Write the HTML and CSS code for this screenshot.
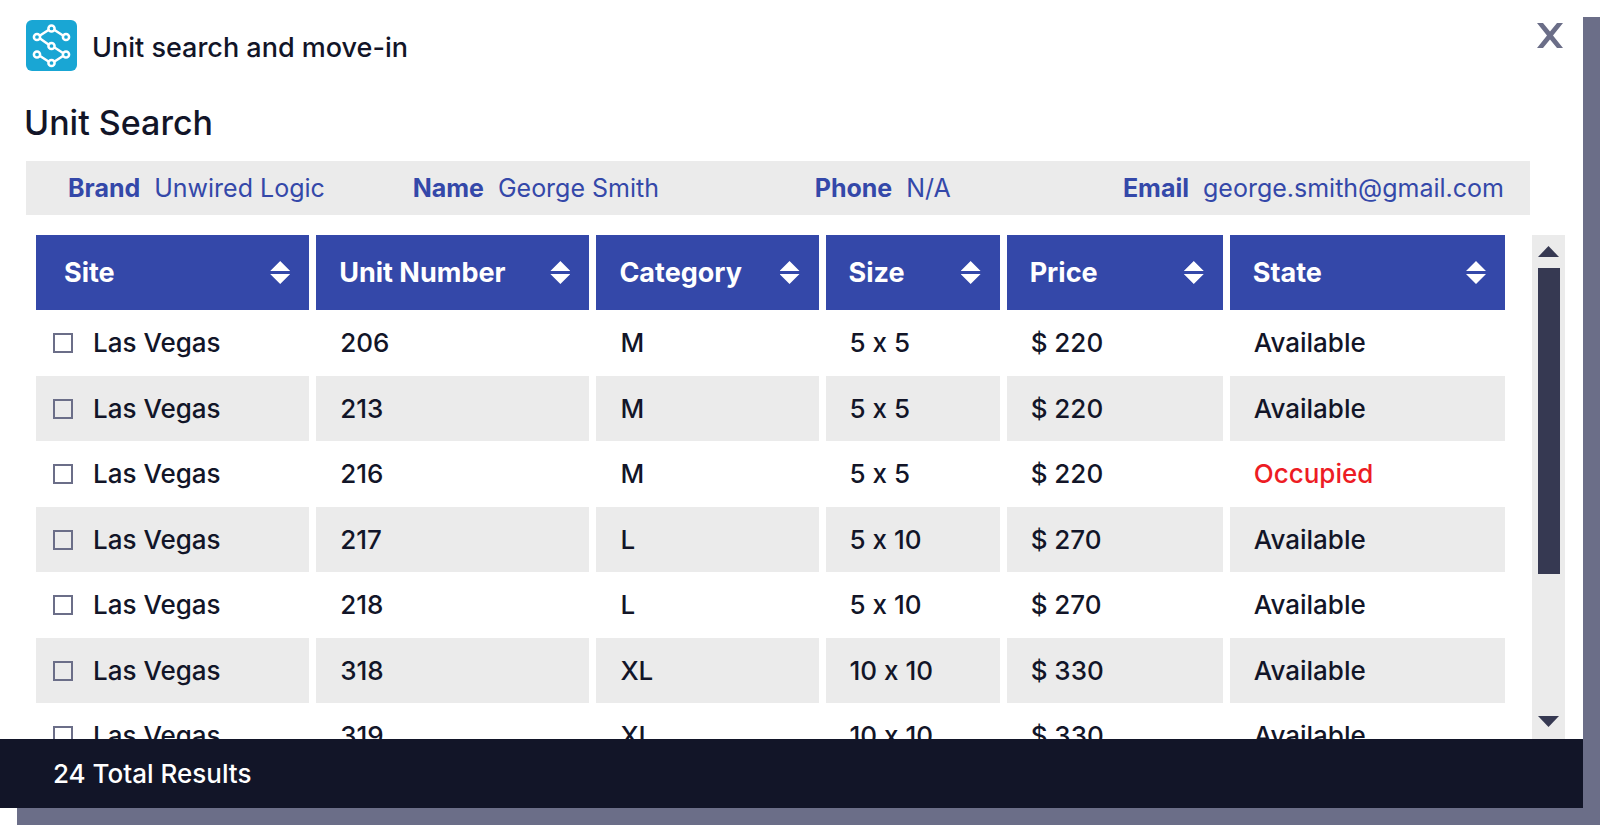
FILE: index.html
```html
<!DOCTYPE html>
<html lang="en">
<head>
  <meta charset="UTF-8">
  <meta name="viewport" content="width=device-width, initial-scale=1.0">
  <title>Unit search and move-in</title>
  <link rel="stylesheet" href="styles.css">
</head>
<body>
  <div class="modal">
    <header class="modal-header">
      <svg class="logo" viewBox="0 0 51 51" aria-hidden="true">
        <rect width="51" height="51" rx="6" fill="#19a6d4"/>
        <g fill="none" stroke="#fff" stroke-width="2.500">
          <path d="M37 15.500L28.500 10M22.500 10L14 15.500M14 18.500L22.500 24.500M28.500 27.500L37 33M37 36L28.500 41.500M22.500 41.500L14 36"/>
          <circle cx="25.500" cy="8.500" r="3.100"/>
          <circle cx="40" cy="17" r="3.100"/>
          <circle cx="11" cy="17" r="3.100"/>
          <circle cx="25.500" cy="26" r="3.100"/>
          <circle cx="40" cy="34.500" r="3.100"/>
          <circle cx="25.500" cy="43" r="3.100"/>
          <circle cx="11" cy="34.500" r="3.100"/>
        </g>
      </svg>
      <span class="modal-title">Unit search and move-in</span>
      <button type="button" class="close" aria-label="Close">
        <svg viewBox="0 0 26 25" aria-hidden="true">
          <path d="M0 0H6L13 8.500L20 0H26L16 12.500L26 25H20L13 16.500L6 25H0L10 12.500Z" fill="#6b6e88"/>
        </svg>
      </button>
    </header>

    <h1>Unit Search</h1>

    <div class="customer">
      <p><strong>Brand</strong>Unwired Logic</p>
      <p><strong>Name</strong>George Smith</p>
      <p><strong>Phone</strong>N/A</p>
      <p><strong>Email</strong>george.smith@gmail.com</p>
    </div>

    <div class="results">
      <div class="table-wrap">
        <table class="units">
          <colgroup>
            <col class="col-site">
            <col class="col-number">
            <col class="col-category">
            <col class="col-size">
            <col class="col-price">
            <col class="col-state">
          </colgroup>
          <thead>
            <tr>
              <th><button type="button" class="sort">Site</button></th>
              <th><button type="button" class="sort">Unit Number</button></th>
              <th><button type="button" class="sort">Category</button></th>
              <th><button type="button" class="sort">Size</button></th>
              <th><button type="button" class="sort">Price</button></th>
              <th><button type="button" class="sort">State</button></th>
            </tr>
          </thead>
          <tbody>
            <tr>
              <td><label><input type="checkbox">Las Vegas</label></td>
              <td>206</td>
              <td>M</td>
              <td>5 x 5</td>
              <td>$ 220</td>
              <td>Available</td>
            </tr>
            <tr>
              <td><label><input type="checkbox">Las Vegas</label></td>
              <td>213</td>
              <td>M</td>
              <td>5 x 5</td>
              <td>$ 220</td>
              <td>Available</td>
            </tr>
            <tr>
              <td><label><input type="checkbox">Las Vegas</label></td>
              <td>216</td>
              <td>M</td>
              <td>5 x 5</td>
              <td>$ 220</td>
              <td class="occupied">Occupied</td>
            </tr>
            <tr>
              <td><label><input type="checkbox">Las Vegas</label></td>
              <td>217</td>
              <td>L</td>
              <td>5 x 10</td>
              <td>$ 270</td>
              <td>Available</td>
            </tr>
            <tr>
              <td><label><input type="checkbox">Las Vegas</label></td>
              <td>218</td>
              <td>L</td>
              <td>5 x 10</td>
              <td>$ 270</td>
              <td>Available</td>
            </tr>
            <tr>
              <td><label><input type="checkbox">Las Vegas</label></td>
              <td>318</td>
              <td>XL</td>
              <td>10 x 10</td>
              <td>$ 330</td>
              <td>Available</td>
            </tr>
            <tr>
              <td><label><input type="checkbox">Las Vegas</label></td>
              <td>319</td>
              <td>XL</td>
              <td>10 x 10</td>
              <td>$ 330</td>
              <td>Available</td>
            </tr>
          </tbody>
        </table>
      </div>
      <div class="scrollbar">
        <button type="button" class="arrow up" aria-label="Scroll up"></button>
        <div class="track"><div class="thumb"></div></div>
        <button type="button" class="arrow down" aria-label="Scroll down"></button>
      </div>
    </div>

    <footer class="modal-footer">24 Total Results</footer>
  </div>
</body>
</html>
```
FILE: styles.css
```css
* {
  box-sizing: border-box;
}
body {
  height: 100vh;
  margin: 0;
  padding: 0 17px 17px 0;
  background: #fff;
  color: #121528;
  font-family: Inter, "Liberation Sans", sans-serif;
  font-size: 26px;
  font-weight: 500;
  font-variant-ligatures: no-contextual;
  line-height: 32px;
}
button {
  padding: 0;
  border: 0;
  background: none;
  color: inherit;
  font: inherit;
  cursor: pointer;
}
.modal {
  display: flex;
  flex-direction: column;
  height: 100%;
  background: #fff;
  box-shadow: 17px 17px 0 #6b6e88;
}

/* header */
.modal-header {
  display: flex;
  align-items: center;
  padding: 20px 20px 0 26px;
}
.logo {
  width: 51px;
  height: 51px;
}
.modal-title {
  flex: 1;
  margin-left: 15px;
  padding-top: 4px;
  font-size: 27px;
}
.close {
  align-self: flex-start;
  padding-top: 3px;
}
.close svg {
  display: block;
  width: 26px;
  height: 25px;
}
h1 {
  margin: 31px 24px 17px;
  font-size: 34px;
  font-weight: 500;
  line-height: 42px;
}

/* customer details */
.customer {
  display: grid;
  grid-template-columns: 24% 28% 1fr auto;
  margin: 0 53px 20px 26px;
  padding: 11px 26px 11px 42px;
  background: #ebebeb;
  color: #3448a9;
  font-size: 25px;
}
.customer p {
  margin: 0;
  font-weight: 400;
}
.customer strong {
  margin-right: 14px;
  font-weight: 700;
}

/* results table */
.results {
  display: flex;
  flex: 1;
  gap: 20px;
  min-height: 0;
  padding: 0 18px 0 29px;
}
.table-wrap {
  flex: 1;
  overflow: hidden;
}
.units {
  width: 100%;
  table-layout: fixed;
  border-collapse: separate;
  border-spacing: 7px 0;
}
.col-site, .col-number {
  width: 273px;
}
.col-category {
  width: 222px;
}
.col-size {
  width: 174px;
}
.col-price {
  width: 216px;
}
.col-state {
  width: 275px;
}
.units th {
  height: 75px;
  padding: 0 19px 0 23px;
  background: #3448a9;
  color: #fff;
  font-size: 27px;
  font-weight: 700;
}
.units th:first-child {
  padding-left: 28px;
}
.sort {
  display: flex;
  align-items: center;
  justify-content: space-between;
  width: 100%;
  white-space: nowrap;
}
.sort::after {
  content: "";
  width: 20px;
  height: 23px;
  background: #fff;
  clip-path: polygon(50% 0, 100% 10px, 0 10px, 0 13px, 100% 13px, 50% 100%, 0 13px, 0 10px);
}
.units td {
  height: 66px;
  padding: 0 0 0 24px;
}
.units td:first-child {
  padding-left: 17px;
}
.units tr:nth-child(even) td {
  height: 65px;
  background: #ebebeb;
}
.units label {
  display: flex;
  align-items: center;
  gap: 20px;
}
.units input {
  appearance: none;
  width: 20px;
  height: 20px;
  margin: 0;
  border: 2px solid #6b6e88;
}
.units .occupied {
  color: #ed1c24;
}

/* scrollbar */
.scrollbar {
  display: flex;
  flex-direction: column;
  align-items: center;
  width: 33px;
  padding: 11px 0 12px;
  background: #ebebeb;
}
.arrow {
  width: 21px;
  height: 11px;
  background: #363952;
}
.up {
  clip-path: polygon(50% 0, 100% 100%, 0 100%);
}
.down {
  clip-path: polygon(0 0, 100% 0, 50% 100%);
}
.track {
  flex: 1;
  width: 22px;
  margin: 11px 0;
}
.thumb {
  height: 70%;
  background: #363952;
}

/* footer */
.modal-footer {
  padding: 19px 53px 18px;
  background: #121528;
  color: #fff;
}
```
